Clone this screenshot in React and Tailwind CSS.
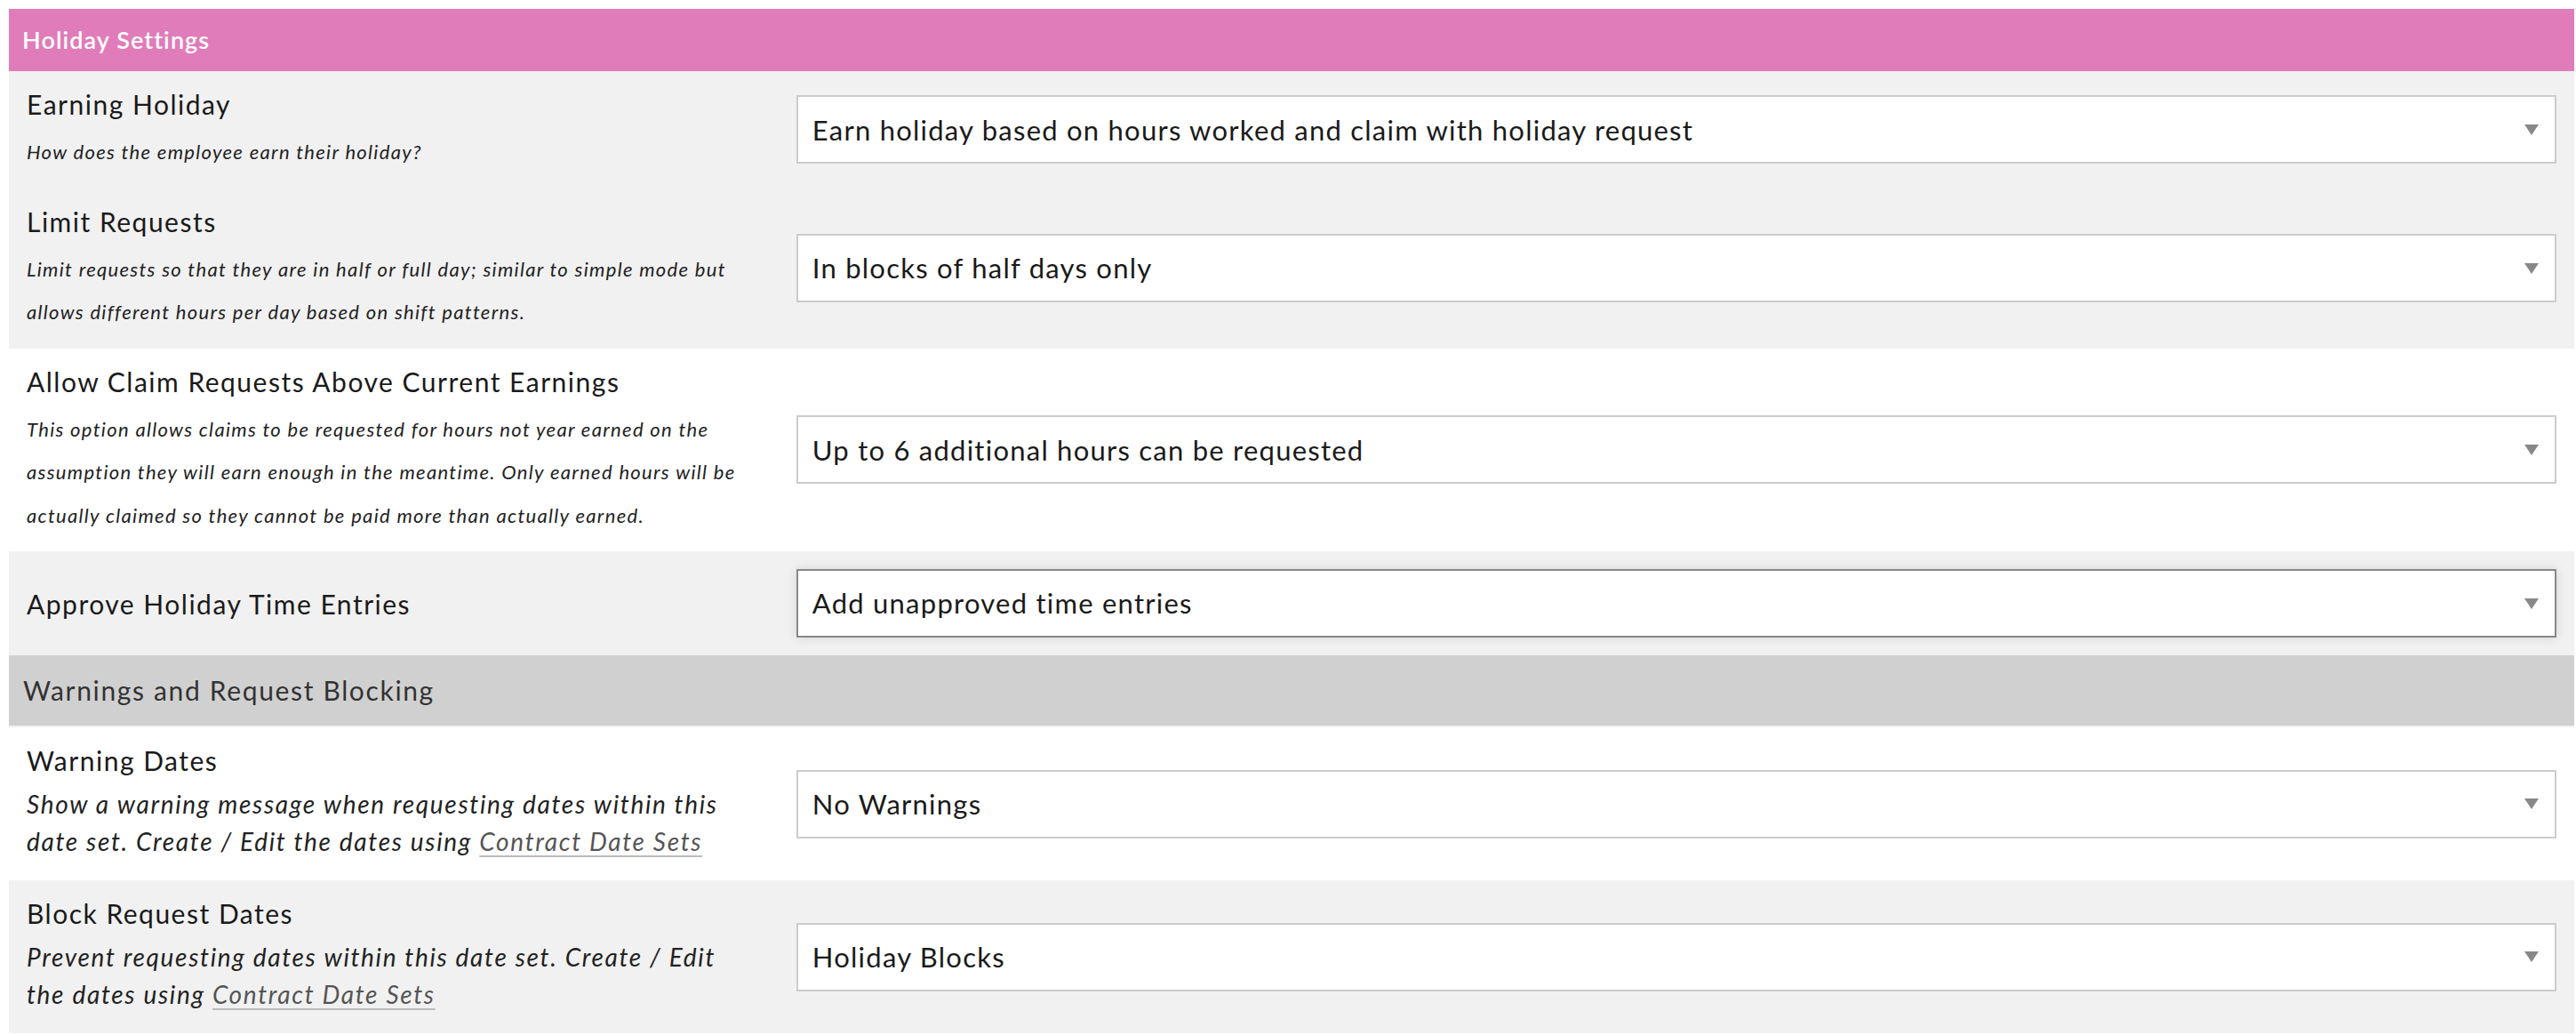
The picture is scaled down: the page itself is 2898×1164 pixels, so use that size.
import React from 'react';

const font = { fontFamily: 'Lato, "Open Sans", sans-serif' };

const Select = ({ value, focused }) => (
  <div
    className={`relative flex items-center w-full h-[77px] bg-white border-2 pl-4 pr-12 text-[31px] tracking-[0.04em] text-[#1a1a1a] ${
      focused ? 'border-[#888] shadow-[0_0_12px_rgba(0,0,0,0.12)]' : 'border-[#ccc]'
    }`}
  >
    <span className="truncate">{value}</span>
    <svg
      className="absolute right-[18px] top-1/2 -translate-y-1/2"
      width="16"
      height="12"
      viewBox="0 0 16 12"
    >
      <path d="M0 0 L16 0 L8 12 Z" fill="#888" />
    </svg>
  </div>
);

const Link = ({ children }) => (
  <a className="text-[#555] underline decoration-[#bbb] decoration-2 underline-offset-[5px]">
    {children}
  </a>
);

const SettingRow = ({ label, desc, large, value, bg, focused }) => (
  <div className={`flex ${bg}`}>
    <div
      className={`w-[30%] px-5 flex flex-col justify-center ${
        desc ? (large ? 'pt-[19px] pb-[23px]' : 'pt-[19px] pb-4') : ''
      }`}
    >
      <div className="text-[30px] leading-[36px] tracking-[0.05em] text-[#1a1a1a]">{label}</div>
      {desc && (
        <div
          className={`italic text-[#222] whitespace-nowrap ${
            large
              ? 'mt-[10px] text-[28px] leading-[42px] tracking-[0.06em]'
              : 'mt-3 text-[22px] leading-[48.5px] tracking-[0.06em]'
          }`}
        >
          {desc}
        </div>
      )}
    </div>
    <div className="w-[70%] px-5 py-5 flex items-center">
      <Select value={value} focused={focused} />
    </div>
  </div>
);

export default function App() {
  return (
    <div className="min-h-screen bg-white pl-[10px] pt-[10px]" style={font}>
      <div className="w-[2886px]">
        <div className="h-[70px] bg-[#e07cba] flex items-center px-[15px]">
          <span className="text-white text-[27px] font-semibold tracking-[0.04em]">Holiday Settings</span>
        </div>

        <SettingRow
          bg="bg-[#f1f1f1]"
          label="Earning Holiday"
          desc="How does the employee earn their holiday?"
          value="Earn holiday based on hours worked and claim with holiday request"
        />
        <SettingRow
          bg="bg-[#f1f1f1]"
          label="Limit Requests"
          desc={
            <>
              Limit requests so that they are in half or full day; similar to simple mode but
              <br />
              allows different hours per day based on shift patterns.
            </>
          }
          value="In blocks of half days only"
        />
        <SettingRow
          bg="bg-white"
          label="Allow Claim Requests Above Current Earnings"
          desc={
            <>
              This option allows claims to be requested for hours not year earned on the
              <br />
              assumption they will earn enough in the meantime. Only earned hours will be
              <br />
              actually claimed so they cannot be paid more than actually earned.
            </>
          }
          value="Up to 6 additional hours can be requested"
        />
        <SettingRow
          bg="bg-[#f1f1f1]"
          label="Approve Holiday Time Entries"
          value="Add unapproved time entries"
          focused
        />

        <div className="h-[81px] bg-[#d0d0d0] border-b-2 border-[#f0f0f0] flex items-center px-4">
          <span className="text-[30px] tracking-[0.055em] text-[#333]">Warnings and Request Blocking</span>
        </div>

        <SettingRow
          bg="bg-white"
          large
          label="Warning Dates"
          desc={
            <>
              Show a warning message when requesting dates within this
              <br />
              date set. Create / Edit the dates using <Link>Contract Date Sets</Link>
            </>
          }
          value="No Warnings"
        />
        <SettingRow
          bg="bg-[#f1f1f1]"
          large
          label="Block Request Dates"
          desc={
            <>
              Prevent requesting dates within this date set. Create / Edit
              <br />
              the dates using <Link>Contract Date Sets</Link>
            </>
          }
          value="Holiday Blocks"
        />
      </div>
    </div>
  );
}
